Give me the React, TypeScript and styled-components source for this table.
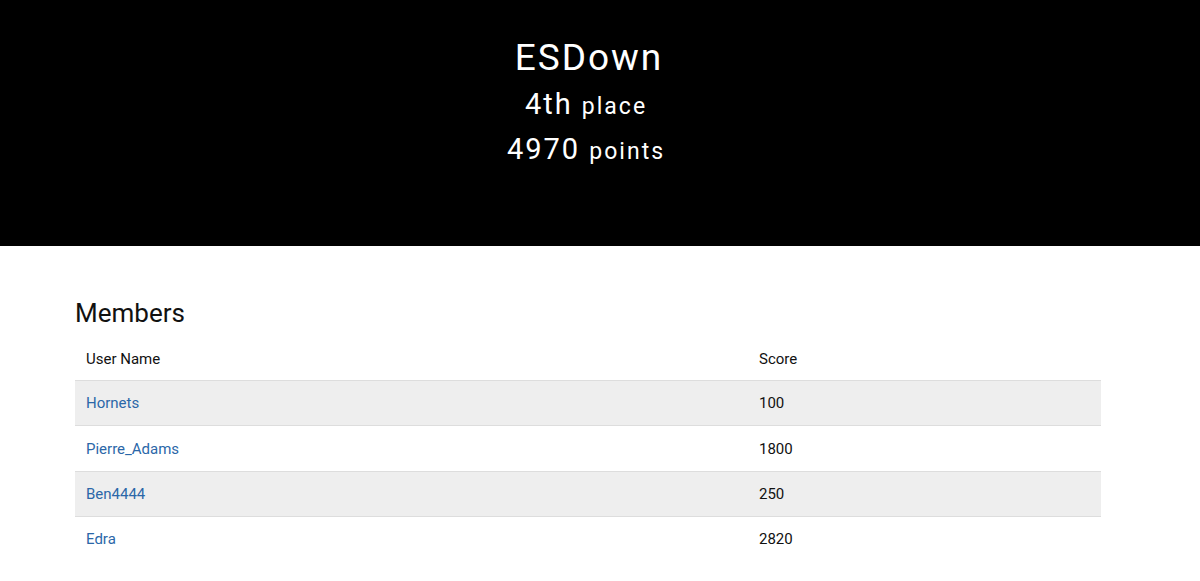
import React from 'react';
import styled, { createGlobalStyle } from 'styled-components';

const GlobalStyle = createGlobalStyle`
    body {
        margin: 0;
        font-family: Roboto, 'Liberation Sans', sans-serif;
        background: #fff;
        color: #111;
    }
`;

const Banner = styled.header`
    height: 246px;
    background: #000;
    color: #fff;
    display: flex;
    flex-direction: column;
    align-items: center;
    padding: 36px 28px 0 0;
    box-sizing: border-box;
    letter-spacing: 2px;
`;

const TeamName = styled.h1`
    margin: 0 0 3px;
    font-size: 37px;
    font-weight: 400;
    line-height: 44px;
    padding-left: 6px;
`;

const StatLine = styled.div`
    font-size: 29px;
    line-height: 42px;
    font-weight: 400;

    span {
        font-size: 23px;
    }
`;

const Content = styled.main`
    padding: 52px 99px 0 75px;
`;

const Heading = styled.h2`
    margin: 0 0 10px;
    font-size: 26px;
    font-weight: 400;
    line-height: 30px;
`;

const Table = styled.table`
    width: 100%;
    border-collapse: collapse;
    font-size: 15px;
`;

const HeadCell = styled.th<{ $w?: string }>`
    text-align: left;
    font-weight: 400;
    padding: 0 11px;
    height: 42px;
    width: ${(p) => p.$w || 'auto'};
`;

const Row = styled.tr<{ $striped: boolean }>`
    background: ${(p) => (p.$striped ? '#eeeeee' : '#fff')};
    border-top: 1px solid #dddddd;
`;

const Cell = styled.td`
    padding: 0 11px;
    height: 44.4px;
`;

const UserLink = styled.a`
    color: #2b67a8;
    text-decoration: none;
`;

const members = [
    { name: 'Hornets', score: 100 },
    { name: 'Pierre_Adams', score: 1800 },
    { name: 'Ben4444', score: 250 },
    { name: 'Edra', score: 2820 },
];

const App = () => {
    return (
        <>
            <GlobalStyle />
            <Banner>
                <TeamName>ESDown</TeamName>
                <StatLine>4th <span>place</span></StatLine>
                <StatLine>4970 <span>points</span></StatLine>
            </Banner>
            <Content>
                <Heading>Members</Heading>
                <Table>
                    <thead>
                        <tr>
                            <HeadCell $w="651px">User Name</HeadCell>
                            <HeadCell>Score</HeadCell>
                        </tr>
                    </thead>
                    <tbody>
                        {members.map((m, i) => (
                            <Row key={m.name} $striped={i % 2 === 0}>
                                <Cell><UserLink href="#">{m.name}</UserLink></Cell>
                                <Cell>{m.score}</Cell>
                            </Row>
                        ))}
                    </tbody>
                </Table>
            </Content>
        </>
    );
};

export default App;
